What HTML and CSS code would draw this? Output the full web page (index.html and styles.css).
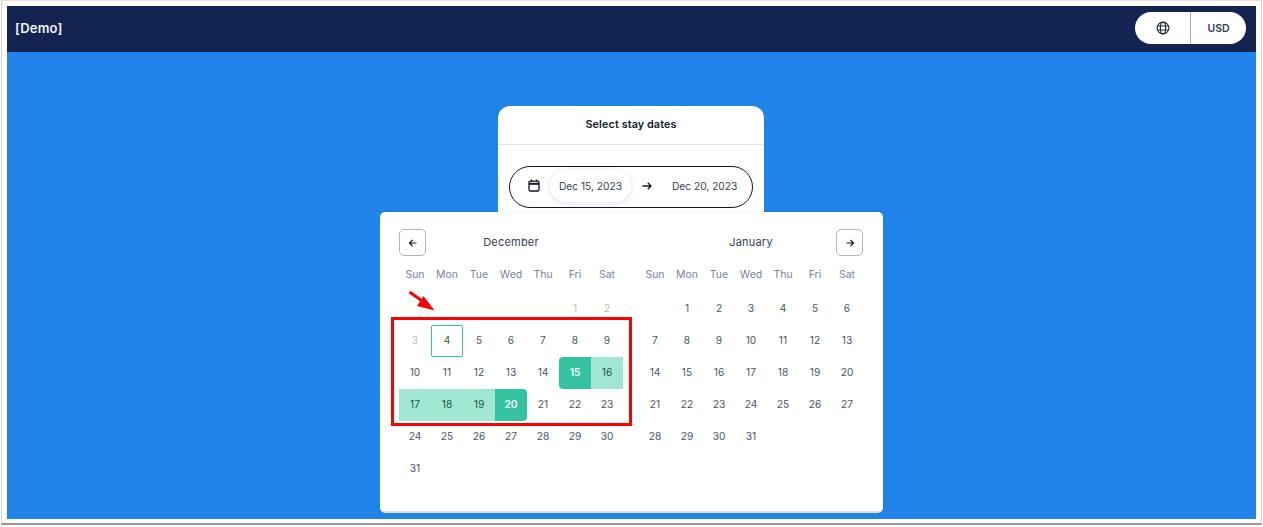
FILE: index.html
```html
<!DOCTYPE html>
<html lang="en">
<head>
    <meta charset="UTF-8">
    <title>Select stay dates</title>
    <link rel="stylesheet" href="styles.css">
</head>
<body>
    <div class="shot">
        <div class="frame">
            <header class="topbar">
                <div class="brand">[Demo]</div>
                <div class="switcher">
                    <div class="switcher-part lang">
                        <svg width="14" height="14" viewBox="0 0 14 14" fill="none" stroke="#1f2937" stroke-width="1.1"><circle cx="7" cy="7" r="5.9"/><ellipse cx="7" cy="7" rx="2.6" ry="5.9"/><path d="M1.4 5h11.2M1.4 9h11.2"/></svg>
                    </div>
                    <div class="switcher-part currency">USD</div>
                </div>
            </header>

            <main class="stage">
                <section class="card">
                    <div class="card-title">Select stay dates</div>
                    <div class="card-body">
                        <div class="range">
                            <svg class="cal-icon" width="12" height="13" viewBox="0 0 12 13" fill="none" stroke="#111827" stroke-width="1.3"><rect x="1" y="2.2" width="10" height="9.8" rx="1.2"/><path d="M1 4.8h10" stroke-width="2"/><path d="M3.4 0.4v2.4M8.6 0.4v2.4"/></svg>
                            <div class="range-date active">Dec 15, 2023</div>
                            <svg class="range-arrow" width="10" height="10" viewBox="0 0 10 10" fill="none" stroke="#111827" stroke-width="1.3"><path d="M0.5 5h8.5M5.8 1.8L9 5L5.8 8.2"/></svg>
                            <div class="range-date">Dec 20, 2023</div>
                        </div>
                    </div>
                </section>

                <section class="picker">
                    <div class="month">
                        <div class="month-head">
                            <button class="nav-btn">
                                <svg width="10" height="10" viewBox="0 0 10 10" fill="none" stroke="#111827" stroke-width="1.2"><path d="M8.5 5H1.5M4.6 1.9L1.5 5l3.1 3.1"/></svg>
                            </button>
                            <div class="month-name">December</div>
                        </div>
                        <div class="days">
                            <div class="dow">Sun</div><div class="dow">Mon</div><div class="dow">Tue</div><div class="dow">Wed</div><div class="dow">Thu</div><div class="dow">Fri</div><div class="dow">Sat</div>
                            <div></div><div></div><div></div><div></div><div></div><div class="day off">1</div><div class="day off">2</div>
                            <div class="day off">3</div><div class="day today">4</div><div class="day">5</div><div class="day">6</div><div class="day">7</div><div class="day">8</div><div class="day">9</div>
                            <div class="day">10</div><div class="day">11</div><div class="day">12</div><div class="day">13</div><div class="day">14</div><div class="day start">15</div><div class="day between">16</div>
                            <div class="day between">17</div><div class="day between">18</div><div class="day between">19</div><div class="day end">20</div><div class="day">21</div><div class="day">22</div><div class="day">23</div>
                            <div class="day">24</div><div class="day">25</div><div class="day">26</div><div class="day">27</div><div class="day">28</div><div class="day">29</div><div class="day">30</div>
                            <div class="day">31</div>
                        </div>
                    </div>
                    <div class="month">
                        <div class="month-head">
                            <div class="month-name">January</div>
                            <button class="nav-btn next">
                                <svg width="10" height="10" viewBox="0 0 10 10" fill="none" stroke="#111827" stroke-width="1.2"><path d="M1.5 5H8.5M5.4 1.9L8.5 5L5.4 8.1"/></svg>
                            </button>
                        </div>
                        <div class="days">
                            <div class="dow">Sun</div><div class="dow">Mon</div><div class="dow">Tue</div><div class="dow">Wed</div><div class="dow">Thu</div><div class="dow">Fri</div><div class="dow">Sat</div>
                            <div></div><div class="day">1</div><div class="day">2</div><div class="day">3</div><div class="day">4</div><div class="day">5</div><div class="day">6</div>
                            <div class="day">7</div><div class="day">8</div><div class="day">9</div><div class="day">10</div><div class="day">11</div><div class="day">12</div><div class="day">13</div>
                            <div class="day">14</div><div class="day">15</div><div class="day">16</div><div class="day">17</div><div class="day">18</div><div class="day">19</div><div class="day">20</div>
                            <div class="day">21</div><div class="day">22</div><div class="day">23</div><div class="day">24</div><div class="day">25</div><div class="day">26</div><div class="day">27</div>
                            <div class="day">28</div><div class="day">29</div><div class="day">30</div><div class="day">31</div>
                        </div>
                    </div>
                </section>

                <!-- annotations on top of the screenshot -->
                <div class="mark-box"></div>
                <svg class="mark-arrow" width="30" height="24" viewBox="0 0 30 24"><path d="M1.5 2L17 13" stroke="#ff0000" stroke-width="3" fill="none"/><path d="M26.5 20.5L9 16L15.5 6Z" fill="#ff0000"/></svg>
            </main>
        </div>
    </div>
</body>
</html>
```

FILE: styles.css
```css
* { margin: 0; padding: 0; box-sizing: border-box; }
html, body { height: 100%; overflow: hidden; }
body { background: #fff; color: #374151; font-family: "Inter", "Liberation Sans", sans-serif; }

/* thin screenshot outline round the whole app */
.shot { margin: 0 1px; height: 525px; padding: 5px 5px 0; border: 1px solid #d4d4d4; border-top-color: #e4e4e4; border-bottom: 2px solid #9a9a9a; }
.frame { height: 513px; display: flex; flex-direction: column; }

.topbar { height: 46px; background: #12244f; display: flex; align-items: center; justify-content: space-between; padding: 0 10px 2px 8px; }
.brand { color: #f1f3f8; font-size: 13px; font-weight: 600; letter-spacing: 0.2px; }
.switcher { display: flex; height: 32px; background: #fff; border-radius: 16px; }
.switcher-part { display: flex; align-items: center; justify-content: center; }
.lang { width: 56px; border-right: 1px solid #a9afbb; }
.currency { width: 55px; font-size: 10.5px; font-weight: 600; color: #374151; }

.stage { position: relative; flex: 1; background: #2083ea; }

.card { position: absolute; left: 491px; top: 54px; width: 266px; height: 160px; background: #fff; border-radius: 12px 12px 0 0; }
.card-title { height: 39px; border-bottom: 1px solid #e3e5ea; padding-bottom: 2px; display: flex; align-items: center; justify-content: center; font-size: 10.8px; font-weight: 600; letter-spacing: 0.1px; color: #111827; }
.card-body { padding: 21px 11px 0; }
.range { height: 42px; border: 1px solid #111827; border-radius: 21px; display: flex; align-items: center; padding: 0 0 3px 18px; }
.cal-icon { margin-right: 10px; flex: none; }
.range-date { font-size: 10.2px; color: #374151; white-space: nowrap; }
.range-date.active { flex: none; width: 81px; height: 32px; margin-right: 11px; border-radius: 16px; background: #fff; box-shadow: 0 1px 6px rgba(0, 0, 0, 0.12); display: flex; align-items: center; justify-content: center; }
.range-arrow { margin-right: 20px; flex: none; }

.picker { position: absolute; left: 373px; top: 160px; width: 503px; height: 301px; background: #fff; border-radius: 5px; border-bottom: 2px solid #dfe2e8; box-shadow: 0 0 1px rgba(60, 70, 90, 0.5); display: flex; gap: 16px; padding: 17px 19px 0; }

.month { width: 224px; }
.month-head { position: relative; height: 27px; display: flex; align-items: center; padding-bottom: 2px; }
.month-name { flex: 1; text-align: center; font-size: 11px; color: #374151; letter-spacing: 0.2px; }
.nav-btn { position: absolute; left: 0; top: 0; width: 27px; height: 27px; background: #fff; border: 1px solid #aeb4c2; border-radius: 5px; display: flex; align-items: center; justify-content: center; }
.nav-btn.next { left: auto; right: 0; }

.days { display: grid; grid-template-columns: repeat(7, 32px); grid-template-rows: 35px; grid-auto-rows: 32px; margin-top: 2px; }
.dow { display: flex; align-items: center; justify-content: center; padding-bottom: 3px; font-size: 10.5px; color: #7b849b; }
.day { display: flex; align-items: center; justify-content: center; padding-bottom: 3px; font-size: 10.2px; color: #4b5563; }
.day.off { color: #b9bec9; }
.day.today { border: 1px solid #35c29f; border-radius: 2px; }
.day.start, .day.end { background: #34c3a0; color: #fff; font-weight: 600; }
.day.start { border-radius: 4px 0 0 4px; }
.day.end { border-radius: 0 4px 4px 0; }
.day.between { background: #9fe7d3; color: #26544a; }

.mark-box { position: absolute; left: 384px; top: 265px; width: 241px; height: 109px; border: 3px solid #ff0000; }
.mark-arrow { position: absolute; left: 401px; top: 238px; }
```
